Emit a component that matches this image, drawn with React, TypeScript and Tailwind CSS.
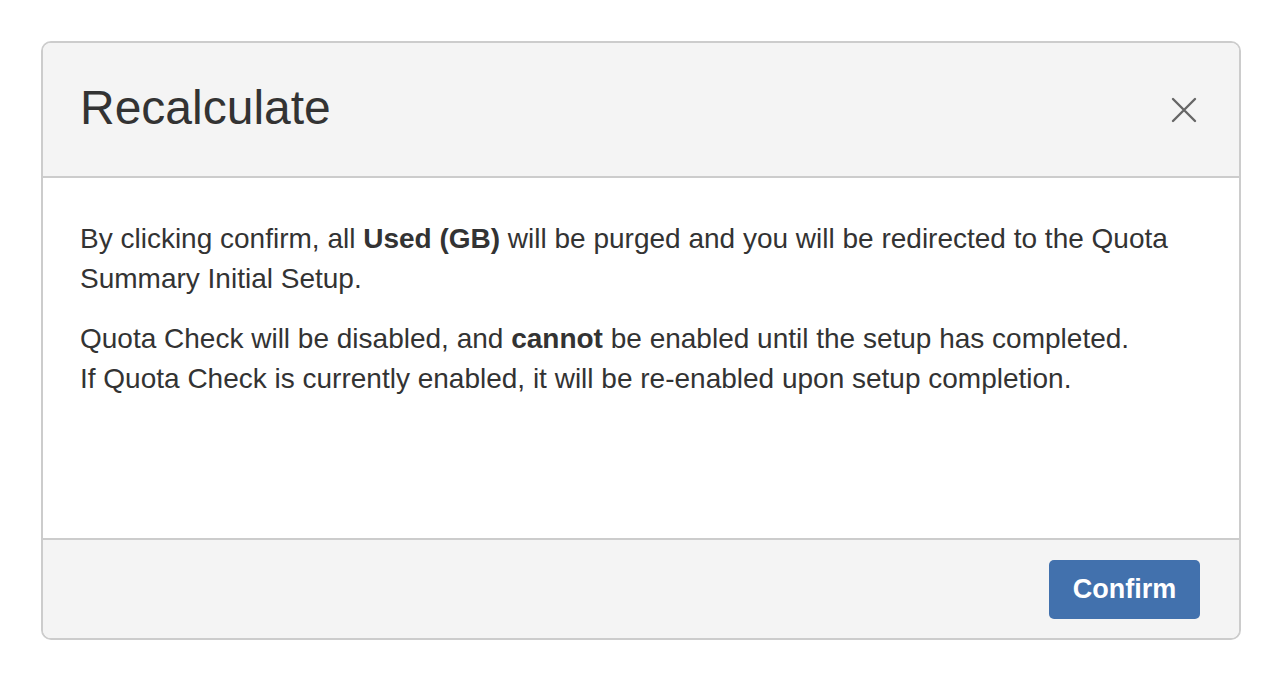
export default function App() {
  return (
    <div className="w-[1280px] h-[680px] bg-white pt-[41px] pl-[41px]" style={{ fontFamily: '"Liberation Sans", Arial, sans-serif' }}>
      <div className="w-[1200px] h-[599px] border-[2px] border-[#cccccc] rounded-[10px] overflow-hidden flex flex-col bg-white">
        {/* header */}
        <div className="h-[135px] shrink-0 bg-[#f4f4f4] border-b-[2px] border-[#cccccc] flex items-center justify-between pl-[37px] pr-[42px]">
          <h1 className="text-[48px] leading-none text-[#333333] pb-[4px]">Recalculate</h1>
          <button className="text-[#666666]">
            <svg width="26" height="26" viewBox="0 0 26 26" fill="none" stroke="currentColor" strokeWidth="2.4" strokeLinecap="round">
              <path d="M2 2L24 24M24 2L2 24" />
            </svg>
          </button>
        </div>
        {/* body */}
        <div className="flex-1 px-[37px] pt-[41px] text-[28px] leading-[40px] text-[#333333]">
          <p className="mb-[20px]">
            By clicking confirm, all <b>Used (GB)</b> will be purged and you will be redirected to the Quota Summary Initial Setup.
          </p>
          <p>
            Quota Check will be disabled, and <b>cannot</b> be enabled until the setup has completed.
            <br />
            If Quota Check is currently enabled, it will be re-enabled upon setup completion.
          </p>
        </div>
        {/* footer */}
        <div className="h-[100px] shrink-0 bg-[#f4f4f4] border-t-[2px] border-[#cccccc] flex items-center justify-end pr-[39px]">
          <button className="w-[151px] h-[59px] rounded-[5px] bg-[#4271ad] text-white text-[27px] font-bold">Confirm</button>
        </div>
      </div>
    </div>
  );
}
